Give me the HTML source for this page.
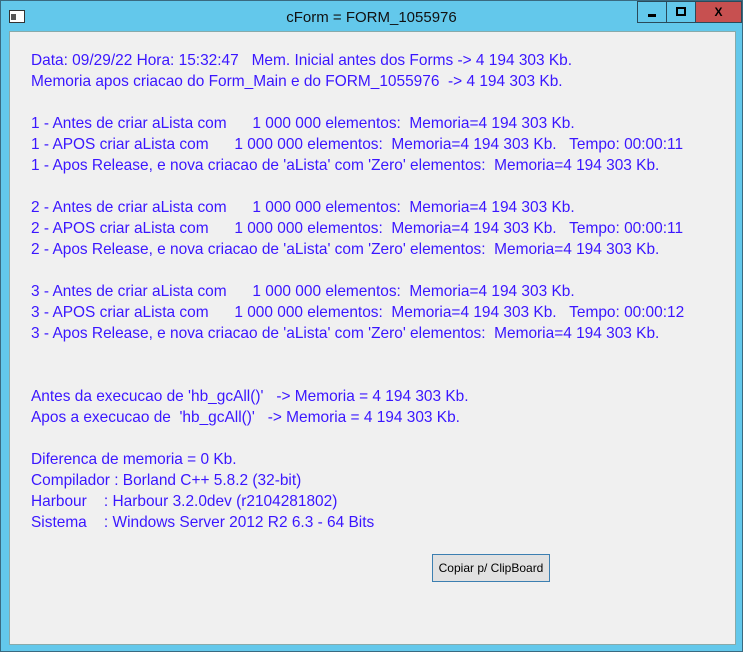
<!DOCTYPE html>
<html><head><meta charset="utf-8"><style>
body{margin:0;width:743px;height:652px;overflow:hidden;background:#fff;font-family:"Liberation Sans",sans-serif;}
.win{position:absolute;left:0;top:0;width:741px;height:650px;background:#63c8eb;border:1px solid #3a6a80;}
.title{position:absolute;left:0;width:743px;top:9px;text-align:center;font-size:15px;color:#111;}
.client{position:absolute;left:9px;top:31px;width:725px;height:612px;background:#f0f0f0;border:1px solid #8aa;}
.l{position:absolute;left:31px;font-size:15.45px;color:#3a16ff;white-space:pre;line-height:18px;}
.btn{position:absolute;left:432px;top:554px;width:116px;height:26px;border:1px solid #3c7fb1;background:#e1e1e1;font-size:12px;line-height:26px;text-align:center;color:#000;}
.cb{position:absolute;top:1px;height:20px;border:1px solid #2a4a5a;}
</style></head><body>
<div class="win"></div>
<div style="position:absolute;left:9px;top:10px;width:14px;height:11px;border:1px solid #333;background:#fff"><div style="position:absolute;left:1px;top:3px;width:5px;height:6px;background:#555"></div></div>
<div class="title">cForm = FORM_1055976</div>
<div class="cb" style="left:637px;width:29px;background:#63c8eb"><div style="position:absolute;left:10px;top:12px;width:8px;height:3px;background:#000"></div></div>
<div class="cb" style="left:666px;width:28px;background:#63c8eb"><div style="position:absolute;left:9px;top:5px;width:6px;height:5px;border:2px solid #000"></div></div>
<div class="cb" style="left:695px;width:45px;background:#c75050;color:#000;font-weight:bold;font-size:12px;text-align:center;line-height:20px">X</div>
<div class="client"></div>
<div class="l" style="top:52px">Data: 09/29/22 Hora: 15:32:47   Mem. Inicial antes dos Forms -&gt; 4 194 303 Kb.</div>
<div class="l" style="top:73px">Memoria apos criacao do Form_Main e do FORM_1055976  -&gt; 4 194 303 Kb.</div>
<div class="l" style="top:115px">1 - Antes de criar aLista com      1 000 000 elementos:  Memoria=4 194 303 Kb.</div>
<div class="l" style="top:136px">1 - APOS criar aLista com      1 000 000 elementos:  Memoria=4 194 303 Kb.   Tempo: 00:00:11</div>
<div class="l" style="top:157px">1 - Apos Release, e nova criacao de 'aLista' com 'Zero' elementos:  Memoria=4 194 303 Kb.</div>
<div class="l" style="top:199px">2 - Antes de criar aLista com      1 000 000 elementos:  Memoria=4 194 303 Kb.</div>
<div class="l" style="top:220px">2 - APOS criar aLista com      1 000 000 elementos:  Memoria=4 194 303 Kb.   Tempo: 00:00:11</div>
<div class="l" style="top:241px">2 - Apos Release, e nova criacao de 'aLista' com 'Zero' elementos:  Memoria=4 194 303 Kb.</div>
<div class="l" style="top:283px">3 - Antes de criar aLista com      1 000 000 elementos:  Memoria=4 194 303 Kb.</div>
<div class="l" style="top:304px">3 - APOS criar aLista com      1 000 000 elementos:  Memoria=4 194 303 Kb.   Tempo: 00:00:12</div>
<div class="l" style="top:325px">3 - Apos Release, e nova criacao de 'aLista' com 'Zero' elementos:  Memoria=4 194 303 Kb.</div>
<div class="l" style="top:388px">Antes da execucao de 'hb_gcAll()'   -&gt; Memoria = 4 194 303 Kb.</div>
<div class="l" style="top:409px">Apos a execucao de  'hb_gcAll()'   -&gt; Memoria = 4 194 303 Kb.</div>
<div class="l" style="top:451px">Diferenca de memoria = 0 Kb.</div>
<div class="l" style="top:472px">Compilador : Borland C++ 5.8.2 (32-bit)</div>
<div class="l" style="top:493px">Harbour    : Harbour 3.2.0dev (r2104281802)</div>
<div class="l" style="top:514px">Sistema    : Windows Server 2012 R2 6.3 - 64 Bits</div>
<div class="btn">Copiar p/ ClipBoard</div>
</body></html>
